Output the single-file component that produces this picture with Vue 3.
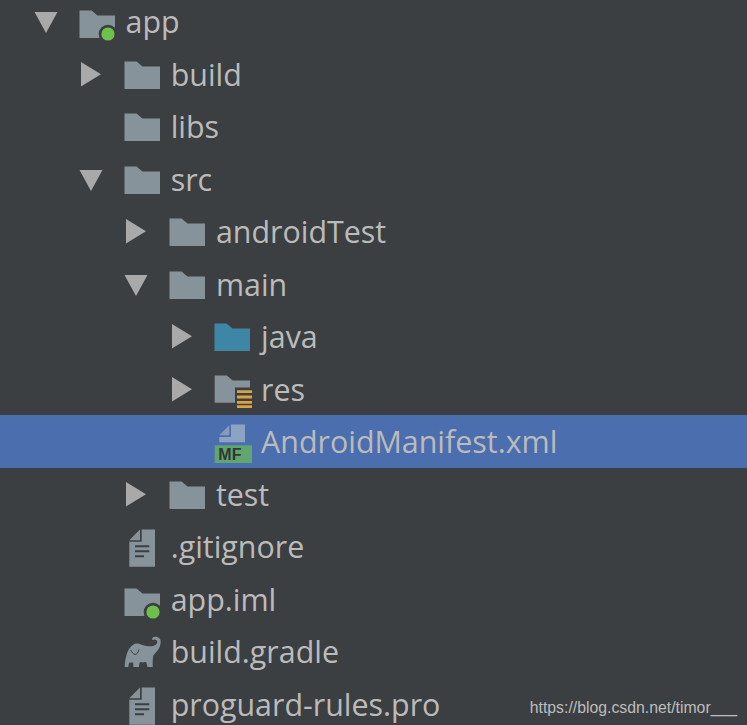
<script setup>
const rows = [
  { level: 0, arrow: 'down', icon: 'module', label: 'app' },
  { level: 1, arrow: 'right', icon: 'folder', label: 'build' },
  { level: 1, arrow: '', icon: 'folder', label: 'libs' },
  { level: 1, arrow: 'down', icon: 'folder', label: 'src' },
  { level: 2, arrow: 'right', icon: 'folder', label: 'androidTest' },
  { level: 2, arrow: 'down', icon: 'folder', label: 'main' },
  { level: 3, arrow: 'right', icon: 'java', label: 'java' },
  { level: 3, arrow: 'right', icon: 'res', label: 'res' },
  { level: 3, arrow: '', icon: 'manifest', label: 'AndroidManifest.xml', selected: true },
  { level: 2, arrow: 'right', icon: 'folder', label: 'test' },
  { level: 1, arrow: '', icon: 'file', label: '.gitignore' },
  { level: 1, arrow: '', icon: 'module', label: 'app.iml' },
  { level: 1, arrow: '', icon: 'gradle', label: 'build.gradle' },
  { level: 1, arrow: '', icon: 'file', label: 'proguard-rules.pro' },
]
const indent = (level) => ({ paddingLeft: `${33 + level * 45.2}px` })
</script>

<template>
  <div class="tree">
    <ul class="list">
      <li v-for="row in rows" :key="row.label" class="row" :class="{ selected: row.selected }" :style="indent(row.level)">
        <span class="arrow">
          <svg v-if="row.arrow === 'down'" width="26" height="30" viewBox="0 0 26 30"><path d="M1.5 6H24.5L13 27Z" fill="#a9a9a9" /></svg>
          <svg v-else-if="row.arrow === 'right'" width="26" height="30" viewBox="0 0 26 30"><path d="M3 3V27.5L23 15.2Z" fill="#a9a9a9" /></svg>
        </span>
        <svg class="icon" width="40" height="44" viewBox="0 -2 40 44">
          <path v-if="row.icon === 'folder'" d="M1.5 7.5H13.5L19.5 12.5H37V35H1.5Z" fill="#87939a" />
          <template v-else-if="row.icon === 'module'">
            <path d="M1.5 9.5H13.5L19.5 14.5H37V37H1.5Z" fill="#87939a" />
            <circle cx="30" cy="33" r="9.3" fill="#3c3f41" />
            <circle cx="30" cy="33" r="6.6" fill="#6fc04b" />
          </template>
          <path v-else-if="row.icon === 'java'" d="M1.5 7.5H13.5L19.5 12.5H37V35H1.5Z" fill="#3d86a5" />
          <template v-else-if="row.icon === 'res'">
            <path d="M1.7 6.5H13.7L19.7 11.5H37V18.5H22V33.8H1.7Z" fill="#87939a" />
            <path d="M24 22.7H39M24 28H39M24 33.4H39M24 37.7H39" stroke="#d9a343" stroke-width="2.8" />
          </template>
          <template v-else-if="row.icon === 'manifest'">
            <path d="M18 3.6H32V21.3H6.3V16H18Z" fill="#8da3c4" />
            <path d="M6.3 14.3H16.3V4.3Z" fill="#8a9bb8" />
            <rect x="1.7" y="24.3" width="37.3" height="18" fill="#62a66f" />
            <text x="5.3" y="39.3" class="mf">MF</text>
          </template>
          <template v-else-if="row.icon === 'file'">
            <path d="M18.7 3.5H32V40.8H6.3V15.8H18.7Z" fill="#87939a" />
            <path d="M6.3 14.2H17V3.5Z" fill="#87939a" />
            <path d="M12 20.2H26.3M12 25.2H26.3M12 30.2H21" stroke="#3c3f41" stroke-width="2" />
          </template>
          <template v-else-if="row.icon === 'gradle'">
            <path d="M1.7 36C2 28 4 20 7 16.7C9 14 11 12.4 13.7 12.4C17 12.4 20 14.6 23.7 15C26 15.4 28.5 15.4 30.3 15C32.5 14.4 34.3 12.8 34.3 11C34.3 9.3 33 8.4 31.7 8.4C30.6 8.4 29.7 8.7 29 9C29 7 30 5.7 31.7 5.7C35 5.7 37.7 7.5 37.7 10C37.7 14 36.5 17 35.3 18.4C33.5 21 31.5 22.5 30.3 24.4C29.6 28 29.7 32 29.7 36H24.3C24.2 34 23.8 32.5 23 31C21 31.5 19 31.5 17 31C16.4 32.5 16 34 16 36H10.3C10.3 34.5 10.3 33 10.3 31.7C9 31.4 7.6 31.4 6.3 31.7C5.8 33 5.4 34.5 5.3 36Z" fill="#87939a" />
            <path d="M7.7 19C9 21.5 10.5 23.4 12 23.4C13.8 23.4 15.3 21.7 16 18.4" fill="none" stroke="#3c3f41" stroke-width="1" />
          </template>
        </svg>
        <span class="label">{{ row.label }}</span>
      </li>
    </ul>
    <span class="mark">https://blog.csdn.net/timor___</span>
  </div>
</template>

<style scoped>
.tree {
  position: relative;
  width: 747px;
  height: 725px;
  overflow: hidden;
  background: #3c3f41;
  font-family: "Open Sans", "Noto Sans", sans-serif;
  color: #bbbbbb;
}
.list {
  list-style: none;
  margin: -5px 0 0;
  padding: 0;
}
.row {
  display: flex;
  align-items: center;
  height: 52.5px;
  box-sizing: border-box;
}
.selected {
  background: #4b6eaf;
}
.arrow {
  flex: 0 0 26px;
  height: 30px;
  display: flex;
  margin-right: 18.5px;
}
.icon {
  flex: none;
  margin-right: 8px;
}
.label {
  font-size: 30.4px;
  padding-top: 1px;
  white-space: nowrap;
}
.mf {
  font: 700 16px "Liberation Sans", sans-serif;
  fill: #2f3a33;
}
.mark {
  position: absolute;
  right: 10px;
  bottom: 8px;
  font: 15.8px "Liberation Sans", sans-serif;
  color: #bdbdbd;
}
</style>
